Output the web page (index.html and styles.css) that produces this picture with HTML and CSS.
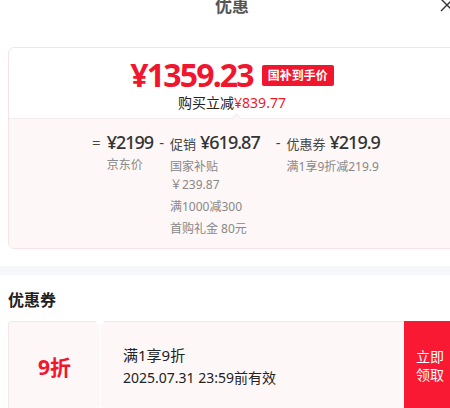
FILE: index.html
```html
<!DOCTYPE html>
<html lang="zh-CN">
<head>
    <meta charset="UTF-8">
    <meta name="viewport" content="width=device-width, initial-scale=1.0">
    <title>优惠</title>
    <link rel="stylesheet" href="styles.css">
</head>
<body>
    <div class="sheet">
        <header class="sheet-head">
            <h2 class="sheet-title">优惠</h2>
            <button class="close-btn" aria-label="关闭">
                <svg width="14" height="14" viewBox="0 0 14 14"><path d="M1 1L13 13M13 1L1 13" stroke="#333" stroke-width="1.4" fill="none"/></svg>
            </button>
        </header>

        <section class="summary">
            <div class="summary-top">
                <div class="final">
                    <span class="final-price">¥1359.23</span>
                    <span class="final-tag">国补到手价</span>
                </div>
                <p class="saved">购买立减<span class="saved-num">¥839.77</span></p>
            </div>

            <div class="summary-detail">
                <div class="calc">
                    <div class="calc-col">
                        <span class="op">=</span>
                        <div class="calc-main"><span class="amount">¥2199</span></div>
                        <ul class="calc-sub">
                            <li>京东价</li>
                        </ul>
                    </div>
                    <div class="calc-col">
                        <span class="op">-</span>
                        <div class="calc-main"><span class="label">促销</span><span class="amount">¥619.87</span></div>
                        <ul class="calc-sub">
                            <li>国家补贴<br>￥239.87</li>
                            <li>满1000减300</li>
                            <li>首购礼金 80元</li>
                        </ul>
                    </div>
                    <div class="calc-col calc-col-wide">
                        <span class="op">-</span>
                        <div class="calc-main"><span class="label">优惠券</span><span class="amount">¥219.9</span></div>
                        <ul class="calc-sub">
                            <li>满1享9折减219.9</li>
                        </ul>
                    </div>
                </div>
            </div>
        </section>

        <div class="strip"></div>

        <h3 class="section-title">优惠券</h3>

        <div class="coupon">
            <div class="coupon-value">9折</div>
            <div class="coupon-info">
                <p class="coupon-rule">满1享9折</p>
                <p class="coupon-date">2025.07.31 23:59前有效</p>
            </div>
            <button class="coupon-btn">立即<br>领取</button>
        </div>
    </div>
</body>
</html>
```

FILE: styles.css
```css
:root {
    --red: #f0162d;
    --red-btn: #fa1932;
    --text-dark: #222;
    --text-mid: #444;
    --text-gray: #888;
    --pink-bg: #fdf7f7;
    --pink-border: #f7e3e5;
    --strip: #f6f7fb;
}

html,
body {
    margin: 0;
    padding: 0;
    overflow: hidden;
    background: #fff;
}

body {
    font-family: "Noto Sans", "Noto Sans CJK SC", sans-serif;
    color: var(--text-dark);
}

.sheet {
    width: 464px;
}

/* header */
.sheet-head {
    position: relative;
    height: 38px;
    margin-top: -13px;
    display: flex;
    justify-content: center;
    align-items: center;
}

.sheet-title {
    margin: 0;
    font-size: 17px;
    font-weight: 700;
    color: #555;
    line-height: 30px;
}

.close-btn {
    position: absolute;
    right: 10px;
    top: 11px;
    padding: 0;
    border: 0;
    background: none;
}

/* summary card */
.summary {
    margin: 22px 8px 0;
    border: 1px solid var(--pink-border);
    border-radius: 6px;
    overflow: hidden;
}

.summary-top {
    padding: 10px 0 6px;
    text-align: center;
}

.final {
    display: flex;
    justify-content: center;
    align-items: center;
    gap: 9px;
    height: 33px;
}

.final-price {
    font-family: "Noto Sans", sans-serif;
    font-size: 32px;
    font-weight: 700;
    color: var(--red);
    letter-spacing: -1.8px;
    line-height: 33px;
}

.final-tag {
    background: var(--red);
    color: #fff;
    font-size: 12px;
    font-weight: 700;
    line-height: 21px;
    padding: 0 6px;
    border-radius: 2px;
    margin-top: 2px;
}

.saved {
    margin: 3px 0 0;
    font-size: 14px;
    line-height: 18px;
    color: var(--text-dark);
}

.saved-num {
    color: var(--red);
}

.summary-detail {
    position: relative;
    background: var(--pink-bg);
    border-top: 1px solid #f6eced;
    padding: 11px 0 10px;
}

.summary-detail::before {
    content: "";
    position: absolute;
    top: -4px;
    left: 50%;
    width: 6px;
    height: 6px;
    margin-left: 1px;
    background: var(--pink-bg);
    border-top: 1px solid #f6eced;
    border-left: 1px solid #f6eced;
    transform: rotate(45deg);
}

.calc {
    display: flex;
    justify-content: center;
    gap: 6px;
    padding-left: 8px;
}

.calc-col {
    display: grid;
    grid-template-columns: auto auto;
    column-gap: 6px;
    align-content: start;
}

.calc-col-wide {
    margin-left: 10px;
}

.op {
    font-size: 15px;
    color: var(--text-mid);
    line-height: 24px;
}

.calc-main {
    display: flex;
    align-items: baseline;
    gap: 4px;
    line-height: 24px;
}

.label {
    font-size: 13px;
    color: var(--text-mid);
}

.amount {
    font-size: 18px;
    font-weight: 500;
    color: #333;
    letter-spacing: -1px;
}

.calc-sub {
    grid-column: 2;
    margin: 2px 0 0;
    padding: 0;
    list-style: none;
    font-size: 12px;
    line-height: 18px;
    color: var(--text-gray);
}

.calc-sub li + li {
    margin-top: 4px;
}

/* grey strip */
.strip {
    height: 9px;
    margin-top: 17px;
    background: var(--strip);
}

.section-title {
    margin: 0;
    padding: 13px 8px 0;
    font-size: 16px;
    font-weight: 700;
    line-height: 24px;
    color: #222;
}

/* coupon */
.coupon {
    display: flex;
    height: 90px;
    margin: 9px 8px 0;
}

.coupon-value {
    width: 91px;
    display: flex;
    align-items: center;
    justify-content: center;
    background: var(--pink-bg);
    border: 1px solid #f6e6e8;
    border-right: 0;
    border-radius: 4px 0 0 4px;
    color: var(--red);
    font-size: 21px;
    font-weight: 700;
}

.coupon-info {
    position: relative;
    flex: 1;
    display: flex;
    flex-direction: column;
    justify-content: center;
    padding-left: 22px;
    background: var(--pink-bg);
    border: 1px solid #f6e6e8;
    border-left: 1px solid #fff;
    border-right: 0;
}

.coupon-info::before,
.coupon-info::after {
    content: "";
    position: absolute;
    left: -5px;
    width: 8px;
    height: 8px;
    border-radius: 50%;
    background: #fff;
}

.coupon-info::before {
    top: -5px;
}

.coupon-info::after {
    bottom: -5px;
}

.coupon-rule,
.coupon-date {
    margin: 0;
    color: #222;
    line-height: 22px;
}

.coupon-rule {
    font-size: 15px;
}

.coupon-date {
    font-size: 14px;
    margin-top: 1px;
}

.coupon-btn {
    width: 52px;
    border: 0;
    padding: 0;
    background: var(--red-btn);
    color: #fff;
    font-family: inherit;
    font-size: 14px;
    line-height: 18px;
    text-align: center;
}
```
